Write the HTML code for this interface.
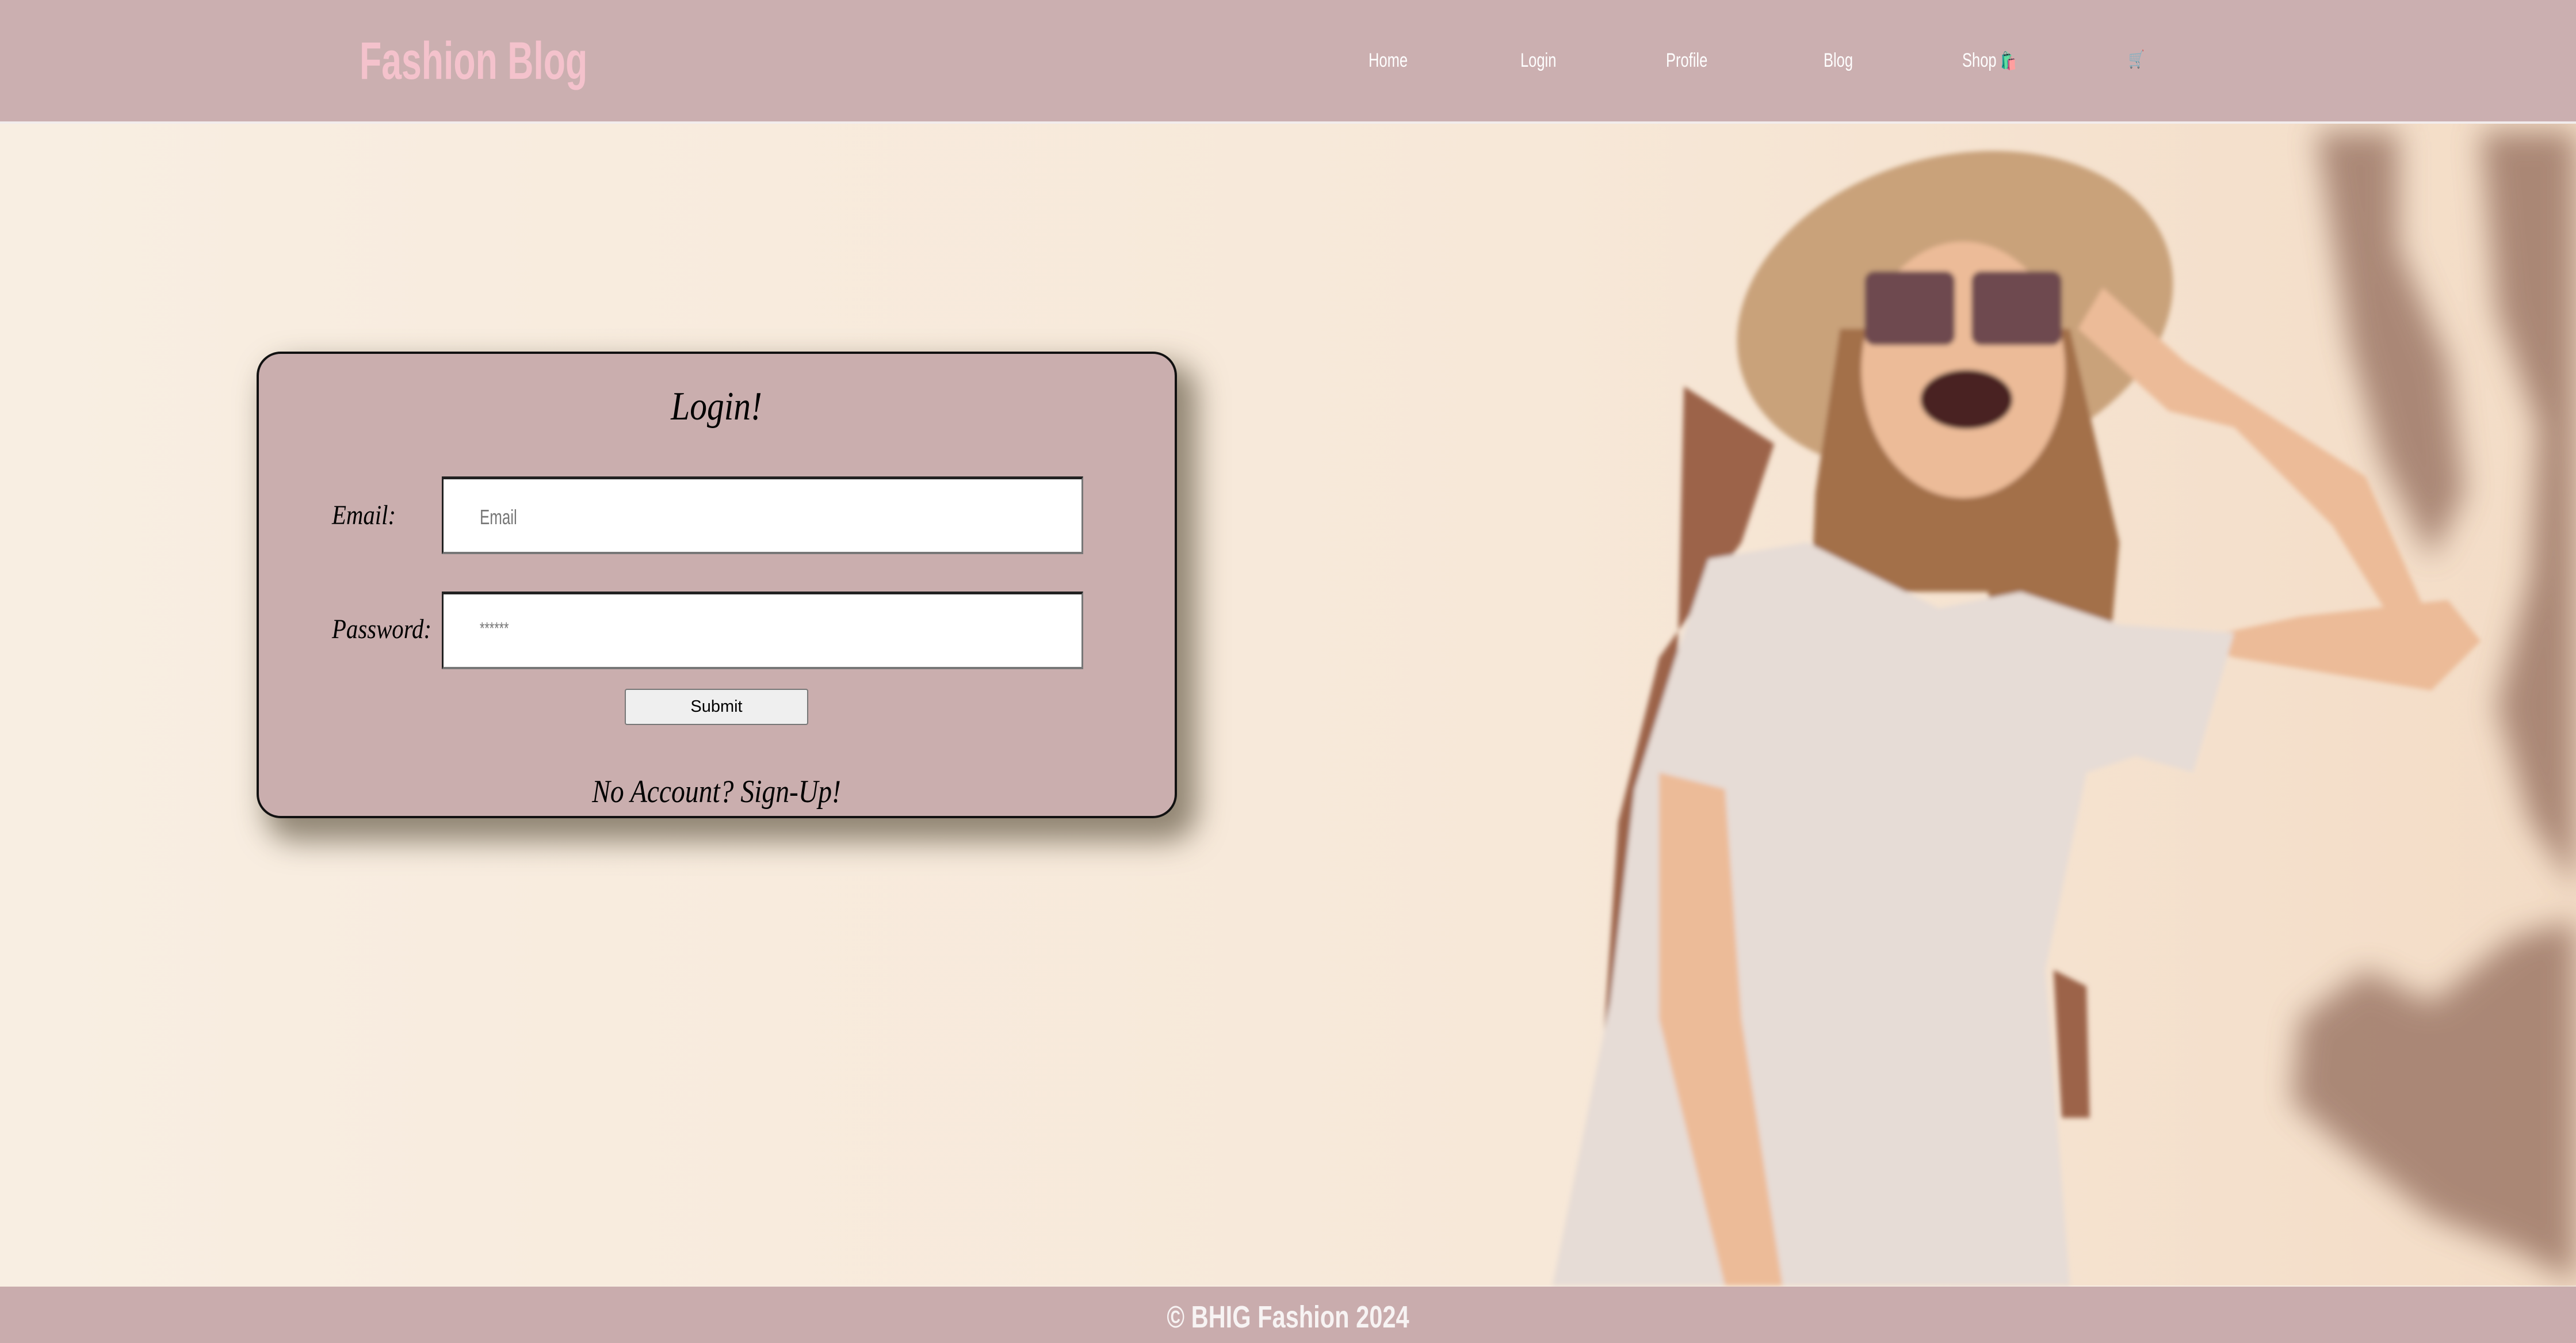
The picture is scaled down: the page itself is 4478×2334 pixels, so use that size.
<!DOCTYPE html>
<html><head><meta charset="utf-8"><style>
*{margin:0;padding:0;box-sizing:border-box}
html,body{width:4478px;height:2334px;overflow:hidden;background:#f8eee2;font-family:"Liberation Sans",sans-serif}
.abs{position:absolute}
#hdr{left:0;top:0;width:4478px;height:211px;background:#cbafb0}
#line{left:0;top:211px;width:4478px;height:4px;background:#f2ecec}
#ftr{left:0;top:2236px;width:4478px;height:98px;background:#c9acad}
.nav{color:#fff;font-size:34px;top:86px;white-space:nowrap;transform:scaleX(0.75);transform-origin:left top}
#card{left:446px;top:611px;width:1600px;height:811px;background:#caaeae;border:4px solid #111;border-radius:42px;box-shadow:25px 30px 50px 10px rgba(90,80,60,.65)}
.cur{font-family:"Liberation Serif",serif;font-style:italic;color:#000;transform:scaleX(0.85);white-space:nowrap}
.inp{background:#fff;border:5px solid #222;border-right-color:#777;border-bottom-color:#777;border-width:5px 3px 4px 3px}
.ph{color:#777;font-size:36px;transform:scaleX(0.72);transform-origin:left top}
</style></head><body>
<svg class="abs" style="left:0;top:0" width="4478" height="2334" viewBox="0 0 1568 817" preserveAspectRatio="none">
<defs><filter id="b"><feGaussianBlur stdDeviation="9"/></filter><filter id="s"><feGaussianBlur stdDeviation="1.5"/></filter>
<linearGradient id="bg" x1="0" x2="1"><stop offset="0" stop-color="#f8eee2"/><stop offset="0.6" stop-color="#f7e8d8"/><stop offset="1" stop-color="#f3dcc6"/></linearGradient></defs>
<rect x="0" y="75" width="1568" height="707" fill="url(#bg)"/>
<g filter="url(#b)" fill="#7a5040" opacity="0.6">
<path d="M1410 80 L1460 80 L1460 150 L1490 220 L1500 300 L1480 340 L1450 280 L1430 210Z"/>
<path d="M1510 80 L1568 80 L1568 540 L1540 500 L1520 430 L1540 350 L1545 260 L1520 190Z"/>
<path d="M1400 620 L1440 590 L1480 610 L1530 570 L1568 560 L1568 780 L1530 760 L1480 740 L1430 700 L1395 670Z"/>
</g>
<g filter="url(#s)">
<path d="M1025 235 L1080 270 L1060 330 L1010 400 L985 500 L975 650 L950 780 L1000 780 L1010 600 L1020 450 Z" fill="#9c6449"/>
<path d="M1250 590 L1270 600 L1272 680 L1255 680 Z" fill="#9c6449"/>
<ellipse cx="1190" cy="190" rx="135" ry="95" fill="#c9a27a" transform="rotate(-15 1190 190)"/>
<path d="M1120 200 L1260 200 L1290 330 L1280 445 L1230 440 L1210 360 L1160 360 L1140 430 L1100 420 L1105 300 Z" fill="#a36f48"/>
<ellipse cx="1195" cy="225" rx="62" ry="78" fill="#ecbb98"/>
<rect x="1135" y="165" width="55" height="45" rx="6" fill="#6e4a4f"/>
<rect x="1200" y="165" width="55" height="45" rx="6" fill="#6e4a4f"/>
<ellipse cx="1197" cy="243" rx="28" ry="18" fill="#4a2020"/>
<path d="M1330 390 L1400 375 L1490 365 L1510 390 L1480 420 L1360 400Z" fill="#ecbb98"/>
<path d="M1480 380 L1440 290 L1330 220 L1280 175 L1265 200 L1320 250 L1360 260 L1420 320 L1470 400 Z" fill="#ecbb98"/>
<path d="M1040 340 L1100 330 L1180 370 L1230 360 L1290 380 L1360 385 L1335 470 L1300 460 L1270 470 L1245 590 L1260 782 L945 782 L980 610 L995 480 L1020 400 Z" fill="#e6dcd6"/>
<path d="M1010 470 L1050 480 L1060 620 L1085 782 L1050 782 L1010 620 Z" fill="#ecbb98"/>
</g>
</svg>
<div id="hdr" class="abs"></div>
<div id="line" class="abs"></div>
<div class="abs" style="left:625px;top:56px;color:#f4c2cc;font-weight:bold;font-size:92px;white-space:nowrap;line-height:1.1;transform:scaleX(0.68);transform-origin:left top">Fashion Blog</div>
<div class="abs nav" style="left:2379px">Home</div>
<div class="abs nav" style="left:2643px">Login</div>
<div class="abs nav" style="left:2896px">Profile</div>
<div class="abs nav" style="left:3170px">Blog</div>
<div class="abs nav" style="left:3411px">Shop <span style="font-size:30px">🛍️</span></div>
<div class="abs nav" style="left:3700px;font-size:30px">🛒</div>
<div id="card" class="abs"></div>
<div class="abs cur" style="left:0;width:2491px;text-align:center;top:667px;font-size:70px">Login!</div>
<div class="abs cur" style="left:577px;top:868px;font-size:48px;transform-origin:left top">Email:</div>
<div class="abs cur" style="left:577px;top:1066px;font-size:48px;transform-origin:left top">Password:</div>
<div class="abs inp" style="left:768px;top:828px;width:1115px;height:135px"></div>
<div class="abs ph" style="left:834px;top:878px">Email</div>
<div class="abs inp" style="left:768px;top:1028px;width:1115px;height:135px"></div>
<div class="abs ph" style="left:834px;top:1076px;font-size:30px">******</div>
<div class="abs" style="left:1086px;top:1197px;width:319px;height:63px;background:#efefef;border:2px solid #777;border-radius:4px;font-size:29px;text-align:center;line-height:59px;color:#000">Submit</div>
<div class="abs cur" style="left:0;width:2491px;text-align:center;top:1344px;font-size:56px">No Account? Sign-Up!</div>
<div id="ftr" class="abs"></div>
<div class="abs" style="left:0;width:4478px;text-align:center;top:2258px;color:#f7f3f3;font-weight:bold;font-size:54px;transform:scaleX(0.77)">© BHIG Fashion 2024</div>
</body></html>
